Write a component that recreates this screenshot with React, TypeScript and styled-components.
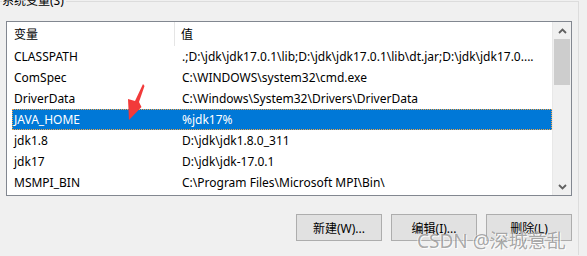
import React, { FC } from 'react';
import styled, { createGlobalStyle } from 'styled-components';

const GlobalStyle = createGlobalStyle`
  html, body {
    margin: 0;
    padding: 0;
    background: #f0f0f0;
    overflow: hidden;
  }
  body {
    font-family: "Noto Sans", "Noto Sans CJK SC", sans-serif;
    font-size: 12px;
    color: #000;
  }
`;

interface EnvVar {
  name: string;
  value: string;
}

const vars: EnvVar[] = [
  { name: 'CLASSPATH', value: '.;D:\\jdk\\jdk17.0.1\\lib;D:\\jdk\\jdk17.0.1\\lib\\dt.jar;D:\\jdk\\jdk17.0....' },
  { name: 'ComSpec', value: 'C:\\WINDOWS\\system32\\cmd.exe' },
  { name: 'DriverData', value: 'C:\\Windows\\System32\\Drivers\\DriverData' },
  { name: 'JAVA_HOME', value: '%jdk17%' },
  { name: 'jdk1.8', value: 'D:\\jdk\\jdk1.8.0_311' },
  { name: 'jdk17', value: 'D:\\jdk\\jdk-17.0.1' },
  { name: 'MSMPI_BIN', value: 'C:\\Program Files\\Microsoft MPI\\Bin\\' },
];

const GroupBox = styled.fieldset`
  box-sizing: border-box;
  margin: -7px 0 0 -6px;
  padding: 0;
  width: 585px;
  height: 262px;
  border: 1px solid #dcdcdc;
  border-bottom: none;
  min-width: 0;
`;

const Legend = styled.legend`
  margin-left: 7px;
  padding: 0 2px 0 0;
  line-height: 16px;
  font-size: 12px;
  color: #000;
`;

const Content = styled.div`
  display: flex;
  flex-direction: column;
  align-items: flex-end;
  padding: 12px 6px 0 12px;
`;

const ListBox = styled.div`
  position: relative;
  box-sizing: border-box;
  width: 566px;
  height: 175px;
  border: 1px solid #828790;
  background: #fff;
  display: flex;
  overflow: hidden;
`;

const ListArea = styled.div`
  flex: 1;
  display: flex;
  flex-direction: column;
`;

const Header = styled.div`
  display: grid;
  grid-template-columns: 168px 1fr;
  height: 24px;
`;

const HeaderCell = styled.div<{ $divider?: boolean }>`
  display: flex;
  align-items: center;
  padding-left: ${(p) => (p.$divider ? '7px' : '6px')};
  border-right: ${(p) => (p.$divider ? '1px solid #e5e5e5' : 'none')};
`;

const Row = styled.div<{ $selected?: boolean }>`
  box-sizing: border-box;
  display: grid;
  grid-template-columns: 163px 1fr;
  height: 21px;
  margin-left: 5px;
  align-items: center;
  white-space: nowrap;
  background: ${(p) => (p.$selected ? '#0078d7' : 'transparent')};
  color: ${(p) => (p.$selected ? '#fff' : '#000')};
  border: 1px dotted ${(p) => (p.$selected ? '#f3a447' : 'transparent')};
`;

const NameCell = styled.span`
  padding-left: 1px;
  overflow: hidden;
`;

const ValueCell = styled.span`
  padding-left: 6px;
  overflow: hidden;
`;

const ScrollBar = styled.div`
  width: 18px;
  background: #f0f0f0;
  border-left: 1px solid #e8e8e8;
  display: flex;
  flex-direction: column;
`;

const ScrollButton = styled.div`
  height: 17px;
  display: flex;
  align-items: center;
  justify-content: center;
`;

const ScrollTrack = styled.div`
  flex: 1;
  padding: 0 1px;
`;

const Thumb = styled.div`
  height: 46px;
  background: #cdcdcd;
`;

const ButtonRow = styled.div`
  display: flex;
  gap: 9px;
  margin-top: 18px;
`;

const Button = styled.button`
  box-sizing: border-box;
  width: 86px;
  height: 27px;
  border: 1px solid #adadad;
  background: #e1e1e1;
  font-family: "Noto Sans", "Noto Sans CJK SC", sans-serif;
  font-size: 12px;
  color: #000;
  padding: 0;
`;

const Arrow = styled.svg`
  position: absolute;
  left: 113px;
  top: 58px;
  width: 30px;
  height: 45px;
`;

const Watermark = styled.div`
  position: absolute;
  left: 417px;
  top: 226px;
  font-family: "Noto Sans", "Noto Sans CJK SC", sans-serif;
  font-size: 19px;
  color: rgba(100, 100, 100, 0.55);
  text-shadow: 1px 1px 0 rgba(255, 255, 255, 0.85), -1px 0 0 rgba(255, 255, 255, 0.6);
  white-space: nowrap;
  pointer-events: none;
`;

const Chevron: FC<{ up?: boolean }> = ({ up }) => (
  <svg width="9" height="6" viewBox="0 0 9 6">
    <path
      d={up ? 'M1 5 L4.5 1.5 L8 5' : 'M1 1 L4.5 4.5 L8 1'}
      fill="none"
      stroke="#606060"
      strokeWidth="1.8"
    />
  </svg>
);

export default function App() {
  return (
    <>
      <GlobalStyle />
      <GroupBox>
        <Legend>系统变量(S)</Legend>
        <Content>
          <ListBox>
            <ListArea>
              <Header>
                <HeaderCell $divider>变量</HeaderCell>
                <HeaderCell>值</HeaderCell>
              </Header>
              {vars.map((v) => (
                <Row key={v.name} $selected={v.name === 'JAVA_HOME'}>
                  <NameCell>{v.name}</NameCell>
                  <ValueCell>{v.value}</ValueCell>
                </Row>
              ))}
            </ListArea>
            <ScrollBar>
              <ScrollButton>
                <Chevron up />
              </ScrollButton>
              <ScrollTrack>
                <Thumb />
              </ScrollTrack>
              <ScrollButton>
                <Chevron />
              </ScrollButton>
            </ScrollBar>
            <Arrow viewBox="0 0 30 45">
              <polygon points="23,4 24.5,6 19,22 21.5,27 9,40 8,19 15,21" fill="#f23a3a" />
            </Arrow>
          </ListBox>
          <ButtonRow>
            <Button>新建(W)...</Button>
            <Button>编辑(I)...</Button>
            <Button>删除(L)</Button>
          </ButtonRow>
        </Content>
      </GroupBox>
      <Watermark>CSDN @深城意乱</Watermark>
    </>
  );
}
